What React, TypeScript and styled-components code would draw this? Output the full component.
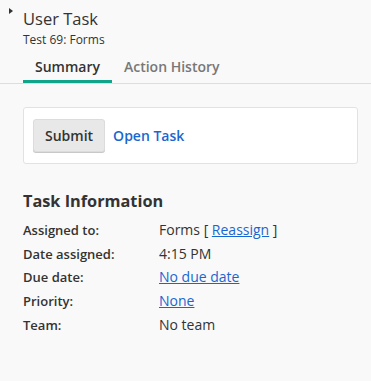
import React from 'react';
import styled, { createGlobalStyle } from 'styled-components';

const GlobalStyle = createGlobalStyle`
  html, body {
    margin: 0;
    padding: 0;
    background: #f9f9f9;
  }
  body {
    font-family: 'Open Sans', 'Liberation Sans', sans-serif;
    color: #333;
  }
`;

type Row = {
  label: string;
  value: React.ReactNode;
};

const App = () => {
  const rows: Row[] = [
    {
      label: 'Assigned to:',
      value: (
        <>
          Forms [ <InfoLink href="#">Reassign</InfoLink> ]
        </>
      ),
    },
    { label: 'Date assigned:', value: '4:15 PM' },
    { label: 'Due date:', value: <InfoLink href="#">No due date</InfoLink> },
    { label: 'Priority:', value: <InfoLink href="#">None</InfoLink> },
    { label: 'Team:', value: 'No team' },
  ];

  return (
    <Page>
      <GlobalStyle />
      <Header>
        <Caret />
        <TitleBlock>
          <Title>User Task</Title>
          <Subtitle>Test 69: Forms</Subtitle>
        </TitleBlock>
      </Header>

      <Tabs>
        <Tab $active>Summary</Tab>
        <Tab>Action History</Tab>
      </Tabs>

      <Content>
        <ActionCard>
          <SubmitButton>Submit</SubmitButton>
          <OpenLink href="#">Open Task</OpenLink>
        </ActionCard>

        <SectionTitle>Task Information</SectionTitle>
        <InfoGrid>
          {rows.map((row) => (
            <React.Fragment key={row.label}>
              <Label>{row.label}</Label>
              <Value>{row.value}</Value>
            </React.Fragment>
          ))}
        </InfoGrid>
      </Content>
    </Page>
  );
};

export default App;

const Page = styled.div`
  width: 371px;
  height: 381px;
  background: #f9f9f9;
  overflow: hidden;
`;

const Header = styled.div`
  display: flex;
  padding: 8px 0 0 9px;
`;

const Caret = styled.span`
  width: 0;
  height: 0;
  border-top: 3px solid transparent;
  border-bottom: 3px solid transparent;
  border-left: 4px solid #333;
`;

const TitleBlock = styled.div`
  margin-left: 10px;
`;

const Title = styled.div`
  font-size: 16.5px;
  line-height: 22px;
  color: #333;
`;

const Subtitle = styled.div`
  margin-top: 2px;
  font-size: 12px;
  line-height: 16px;
  color: #333;
`;

const Tabs = styled.div`
  display: flex;
  margin-top: 9px;
  padding-left: 23px;
  border-bottom: 1px solid #ddd;
`;

const Tab = styled.div<{ $active?: boolean }>`
  padding: 0 12px 3px;
  font-size: 14px;
  line-height: 20px;
  font-weight: 600;
  color: ${(p) => (p.$active ? '#333' : '#777')};
  border-bottom: 3px solid ${(p) => (p.$active ? '#10a58a' : 'transparent')};
`;

const Content = styled.div`
  padding: 23px 13px 0 23px;
`;

const ActionCard = styled.div`
  display: flex;
  align-items: center;
  gap: 8px;
  height: 57px;
  box-sizing: border-box;
  padding: 0 9px;
  background: #fff;
  border: 1px solid #e2e2e2;
  border-radius: 3px;
`;

const SubmitButton = styled.button`
  height: 33px;
  padding: 0 11px;
  font-family: inherit;
  font-size: 14px;
  font-weight: 600;
  color: #333;
  background: #e8e8e8;
  border: 1px solid #dcdcdc;
  border-radius: 3px;
  box-shadow: 0 1px 0 #c8c8c8;
`;

const OpenLink = styled.a`
  font-size: 14px;
  font-weight: 600;
  color: #1a66d0;
  text-decoration: none;
`;

const SectionTitle = styled.div`
  margin-top: 25px;
  font-size: 16.3px;
  line-height: 24px;
  font-weight: 700;
  color: #333;
`;

const InfoGrid = styled.div`
  display: grid;
  grid-template-columns: 136px 1fr;
  align-items: baseline;
  row-gap: 3.2px;
  margin-top: 7px;
  line-height: 19.5px;
`;

const Label = styled.div`
  font-size: 13px;
  font-weight: 600;
  color: #333;
`;

const Value = styled.div`
  font-size: 14px;
  color: #333;
`;

const InfoLink = styled.a`
  color: #1a66d0;
  text-decoration: underline;
`;
